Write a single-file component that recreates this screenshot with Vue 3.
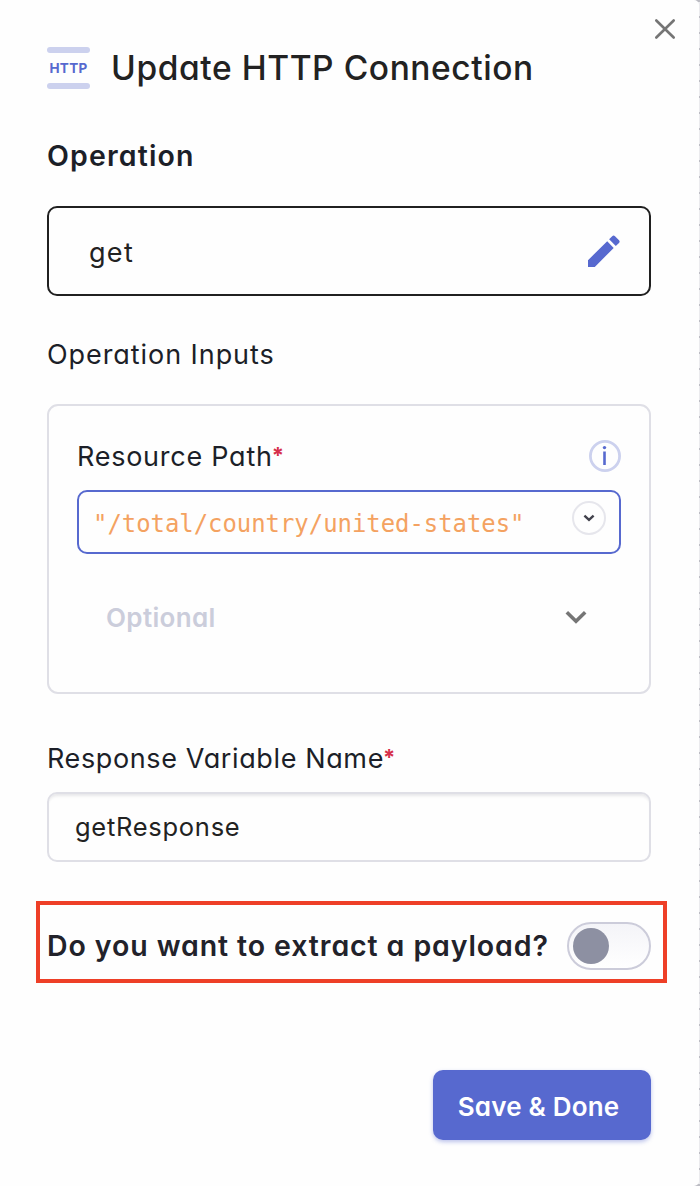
<script setup>
import { ref } from 'vue'

const resourcePath = ref('"/total/country/united-states"')
const responseName = ref('getResponse')
const extractPayload = ref(false)
</script>

<template>
  <main class="canvas">
    <section class="drawer">
      <button class="close" aria-label="Close">
        <svg width="22" height="22" viewBox="0 0 22 22"><path d="M2.3 2.5 19.7 19.5M19.7 2.5 2.3 19.5" /></svg>
      </button>

      <header class="header">
        <div class="http-icon"><span>HTTP</span></div>
        <h1>Update HTTP Connection</h1>
      </header>

      <h2 class="heading">Operation</h2>
      <div class="operation">
        <span>get</span>
        <svg class="pencil" width="34" height="34" viewBox="0 0 34 34">
          <path d="M1 26.2V33H7.8L26.7 13.9 20.2 7.2ZM22.1 5.3 25.2 2.2Q26.6.8 28 2.2L32 6.2Q33.3 7.6 32 9L28.8 12.1Z" />
        </svg>
      </div>

      <h3 class="label inputs-label">Operation Inputs</h3>
      <div class="inputs">
        <div class="row">
          <span class="label path-label">Resource Path<b class="star">*</b></span>
          <svg class="info" width="32" height="32" viewBox="0 0 32 32">
            <circle class="ring" cx="16" cy="16" r="14.6" />
            <circle class="dot" cx="15.5" cy="7.6" r="1.7" />
            <path class="stem" d="M15.5 11.5V25" />
          </svg>
        </div>
        <div class="code-field">
          <code>{{ resourcePath }}</code>
          <span class="picker">
            <svg width="12" height="8" viewBox="0 0 12 8"><path d="M1.4 1.6 6 5.9 10.6 1.6" /></svg>
          </span>
        </div>
        <div class="optional">
          <span>Optional</span>
          <svg width="22" height="14" viewBox="0 0 22 14"><path d="M1.8 2.3 11 11.3 20.2 2.3" /></svg>
        </div>
      </div>

      <div class="label response-label">Response Variable Name<b class="star">*</b></div>
      <div class="text-field">{{ responseName }}</div>

      <div class="payload">
        <span class="question">Do you want to extract a payload?</span>
        <span class="toggle" :class="{ on: extractPayload }"><i></i></span>
      </div>

      <button class="save">Save &amp; Done</button>
    </section>
  </main>
</template>

<style>
html, body { margin: 0; background: #fff; }
</style>

<style scoped>
.canvas {
  box-sizing: border-box;
  width: 700px;
  height: 1186px;
  padding-right: 1px;
  background: repeating-linear-gradient(to bottom, #bcbcc3 0 2px, #ebebee 2px 16px);
  font-family: Inter, "Open Sans", sans-serif;
  font-feature-settings: "cv11";
  color: #1f2026;
  white-space: nowrap;
}
.canvas * { box-sizing: border-box; }
.drawer {
  position: relative;
  display: flex;
  flex-direction: column;
  width: 699px;
  height: 1186px;
  padding: 47px 48px 0 47px;
  background: #fefefe;
  border-radius: 0 5px 5px 0;
}
button { border: 0; padding: 0; font: inherit; font-feature-settings: inherit; }
.close {
  position: absolute;
  top: 18px;
  right: 23px;
  width: 22px;
  height: 22px;
  background: none;
}
.close svg { display: block; }
.close path { fill: none; stroke: #757575; stroke-width: 2.6; stroke-linecap: round; }

.header { display: flex; height: 42px; gap: 21px; align-items: center; }
.http-icon {
  display: flex;
  flex-direction: column;
  align-items: center;
  justify-content: space-between;
  width: 43px;
  height: 42px;
  font-size: 13.5px;
  line-height: 18px;
  font-weight: 700;
  letter-spacing: 0.3px;
  color: #5769cf;
}
.http-icon::before, .http-icon::after {
  content: "";
  width: 43px;
  height: 6px;
  border-radius: 3px;
  background: #ccd1ee;
}
h1 { margin: 0; font-size: 33.5px; line-height: 42px; font-weight: 500; letter-spacing: 0.58px; color: #222; }
.heading {
  margin: 49px 0 0;
  height: 36px;
  line-height: 36px;
  font-size: 28.5px;
  font-weight: 600;
  letter-spacing: 1.15px;
  color: #1c1f28;
}

.operation {
  display: flex;
  align-items: center;
  justify-content: space-between;
  height: 90px;
  margin-top: 32px;
  padding: 0 28px 0 40px;
  border: 2px solid #202020;
  border-radius: 10px;
  font-size: 27px;
  letter-spacing: 1.3px;
  color: #222;
}
.operation > span { padding-top: 3px; }
.pencil { fill: #5769cf; }
.label { height: 36px; line-height: 36px; font-size: 27px; font-weight: 400; color: #1c1f28; }
.inputs-label { margin: 41px 0 0; letter-spacing: 0.93px; }
.star {
  display: inline-block;
  margin-left: -1px;
  font-weight: 700;
  font-size: 22px;
  line-height: 1;
  letter-spacing: 0;
  color: #d6304b;
  vertical-align: 3px;
}

.inputs {
  height: 290px;
  margin-top: 31px;
  padding: 32px 28px 0;
  border: 2px solid #dfdfe6;
  border-radius: 11px;
}
.row { display: flex; height: 36px; align-items: center; justify-content: space-between; }
.path-label { height: 34px; letter-spacing: 0.74px; }
.ring { fill: none; stroke: #ccd1ee; stroke-width: 2.8; }
.dot { fill: #5769cf; }
.stem { stroke: #5769cf; stroke-width: 2.6; }
.code-field {
  display: flex;
  justify-content: space-between;
  height: 64px;
  margin-top: 16px;
  padding: 9px 13px 0 14px;
  border: 2px solid #5769cf;
  border-radius: 10px;
}
code {
  padding-top: 5px;
  font: 23.9px/36px "DejaVu Sans Mono", monospace;
  font-feature-settings: normal;
  color: #f4a261;
}
.picker {
  display: flex;
  align-items: center;
  justify-content: center;
  width: 34px;
  height: 34px;
  border: 2px solid #e6e6ec;
  border-radius: 50%;
}
.picker path { fill: none; stroke: #42424c; stroke-width: 2.4; }
.optional {
  display: flex;
  align-items: center;
  justify-content: space-between;
  height: 36px;
  margin-top: 45px;
  padding: 0 34px 0 29px;
  font-size: 26px;
  font-weight: 600;
  letter-spacing: 0.35px;
  color: #cbcddb;
}
.optional path { fill: none; stroke: #757575; stroke-width: 3.6; }

.response-label { margin-top: 47px; letter-spacing: 0.62px; }
.text-field {
  height: 70px;
  margin-top: 15px;
  padding-left: 26px;
  border: 2px solid #dfdfe6;
  border-radius: 10px;
  box-shadow: inset 0 4px 3px -2px rgba(30, 30, 50, 0.1);
  font-size: 25.5px;
  line-height: 66px;
  letter-spacing: 0.72px;
  color: #222;
}
.payload {
  display: flex;
  align-items: center;
  justify-content: space-between;
  height: 82px;
  margin: 39px -16px 0 -11px;
  padding: 8px 12px 0 7px;
  border: 4px solid #ee3f27;
  font-size: 28.5px;
  font-weight: 600;
  letter-spacing: 0.9px;
  color: #22222a;
}
.question { padding-bottom: 2px; }
.toggle {
  width: 84px;
  height: 48px;
  padding: 4px;
  border: 2px solid #ccccda;
  border-radius: 24px;
  background: linear-gradient(#f4f4f8, #fff);
}
.toggle i { display: block; width: 36px; height: 36px; border-radius: 50%; background: #8d90a2; }
.toggle.on i { margin-left: auto; }
.save {
  align-self: flex-end;
  width: 218px;
  height: 70px;
  margin: 87px 0 0;
  padding: 3px 7px 0 0;
  border-radius: 10px;
  background: #5769cf;
  box-shadow: 0 2px 4px rgba(87, 105, 207, 0.4);
  color: #fff;
  font-size: 26px;
  font-weight: 600;
  letter-spacing: 0.2px;
}
</style>
